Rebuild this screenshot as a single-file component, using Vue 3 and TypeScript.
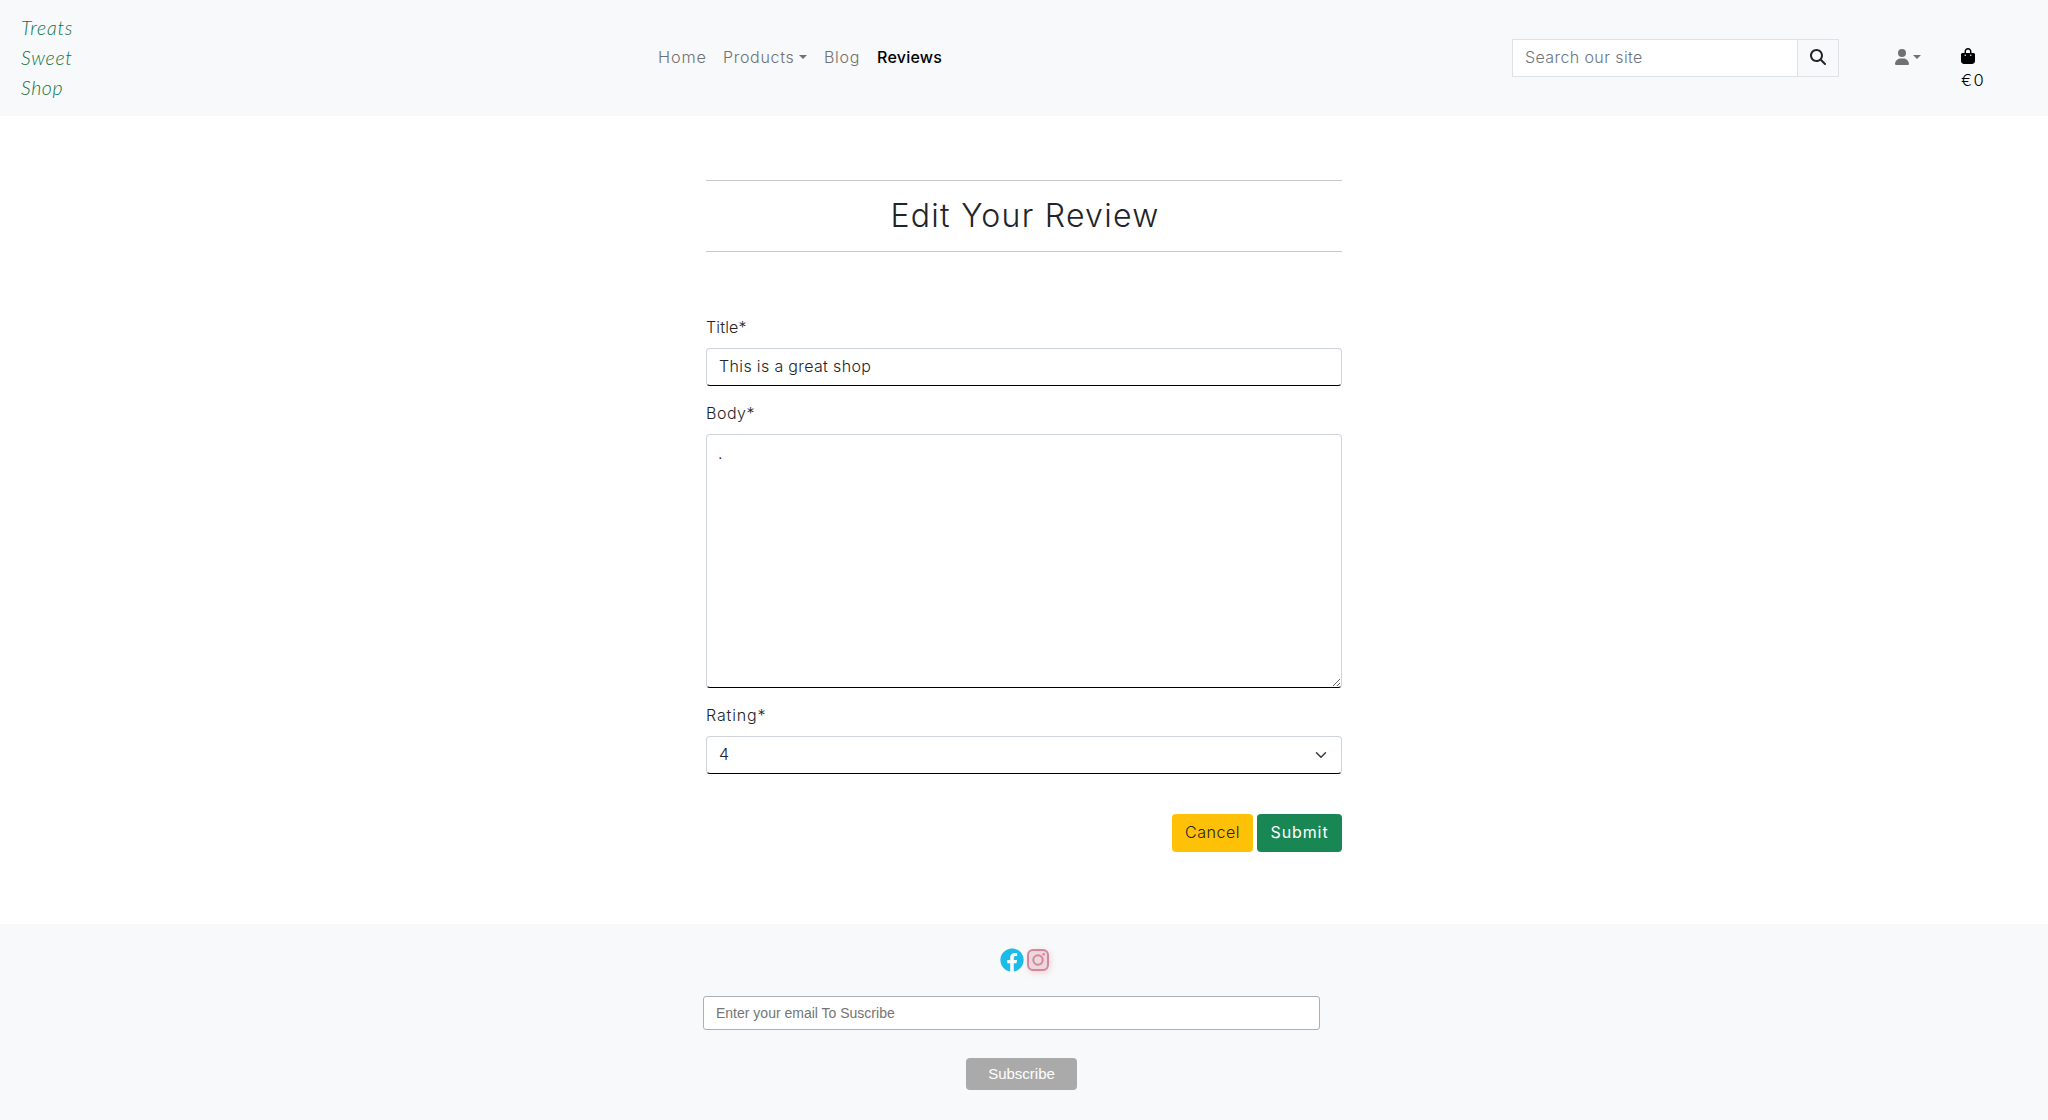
<script setup lang="ts">
import { ref } from 'vue'

const search = ref('')
const title = ref('This is a great shop')
const body = ref('.')
const rating = ref('4')
const email = ref('')
const ratings: string[] = ['1', '2', '3', '4', '5']
</script>

<template>
  <div class="page">
    <header class="header">
      <a class="brand"><span class="b1">Treats</span><span class="b2">Sweet</span><span class="b3">Shop</span></a>
      <nav class="nav">
        <a class="home">Home</a>
        <a class="products"><span>Products</span><i class="caret"></i></a>
        <a class="blog">Blog</a>
        <a class="active">Reviews</a>
      </nav>
      <form class="search" @submit.prevent>
        <input v-model="search" type="text" placeholder="Search our site" />
        <button type="submit" aria-label="Search">
          <svg width="16" height="16" viewBox="0 0 512 512"><path fill="#212529" d="M416 208c0 45.900-14.900 88.300-40 122.700L502.600 457.400c12.500 12.500 12.500 32.800 0 45.300s-32.800 12.500-45.300 0L330.700 376c-34.400 25.200-76.800 40-122.700 40C93.100 416 0 322.900 0 208S93.100 0 208 0S416 93.100 416 208zM208 352a144 144 0 1 0 0-288 144 144 0 1 0 0 288z" /></svg>
        </button>
      </form>
      <a class="account">
        <svg width="14" height="16" viewBox="0 0 448 512"><path fill="#707172" d="M224 256A128 128 0 1 0 224 0a128 128 0 1 0 0 256zm-45.700 48C79.800 304 0 383.800 0 482.300C0 498.700 13.300 512 29.700 512H418.300c16.400 0 29.700-13.300 29.700-29.700C448 383.800 368.200 304 269.700 304H178.300z" /></svg>
        <i class="caret"></i>
      </a>
      <a class="bag">
        <svg width="14" height="16" viewBox="0 0 448 512"><path d="M160 112c0-35.300 28.700-64 64-64s64 28.700 64 64v48H160V112zm-48 48H48c-26.500 0-48 21.500-48 48V416c0 53 43 96 96 96H352c53 0 96-43 96-96V208c0-26.500-21.500-48-48-48H336V112C336 50.100 285.900 0 224 0S112 50.100 112 112v48zm24 48a24 24 0 1 1 0 48 24 24 0 1 1 0-48zm152 24a24 24 0 1 1 48 0 24 24 0 1 1-48 0z" /></svg>
        <span>€0</span>
      </a>
    </header>

    <main class="content">
      <h2><span>Edit Your Review</span></h2>
      <form @submit.prevent>
        <label for="title">Title*</label>
        <input id="title" v-model="title" class="control" type="text" />
        <label for="body" class="body-label">Body*</label>
        <textarea id="body" v-model="body" class="control"></textarea>
        <label for="rating" class="rating-label">Rating*</label>
        <div class="select-wrap">
          <select id="rating" v-model="rating" class="control">
            <option v-for="r in ratings" :key="r">{{ r }}</option>
          </select>
          <svg class="chevron" width="16" height="12" viewBox="0 0 16 16"><path fill="none" stroke="#343a40" stroke-linecap="round" stroke-linejoin="round" stroke-width="2" d="m2 5 6 6 6-6" /></svg>
        </div>
        <div class="actions">
          <button type="button" class="cancel">Cancel</button>
          <button type="submit" class="submit">Submit</button>
        </div>
      </form>
    </main>

    <footer class="footer">
      <div class="social">
        <svg width="24" height="24" viewBox="0 0 512 512"><path fill="#1bbde8" d="M504 256C504 119 393 8 256 8S8 119 8 256c0 123.800 90.700 226.400 209.250 245V327.690h-63V256h63v-54.640c0-62.150 37-96.480 93.670-96.480 27.140 0 55.520 4.840 55.520 4.840v61h-31.280c-30.800 0-40.410 19.120-40.410 38.730V256h68.780l-11 71.690h-57.780V501C413.310 482.380 504 379.780 504 256z" /></svg>
        <svg class="insta" width="22" height="22" viewBox="0 0 22 22" fill="none" stroke="#d48797" stroke-width="2"><rect x="1" y="1" width="20" height="20" rx="5" fill="#ecd7df" /><circle cx="11" cy="11" r="4.700" /><circle cx="16.700" cy="5.300" r="1.300" fill="#d48797" stroke="none" /></svg>
      </div>
      <form @submit.prevent>
        <input v-model="email" type="email" placeholder="Enter your email To Suscribe" />
        <button type="submit">Subscribe</button>
      </form>
    </footer>
  </div>
</template>

<style>
body { margin: 0; background: #fff; }
</style>

<style scoped>
* { box-sizing: border-box; }
.page { width: 2048px; height: 1120px; overflow: hidden; display: flex; flex-direction: column; font: 300 16px/24px Inter, sans-serif; color: #212529; }
input, button, select, textarea { font: inherit; letter-spacing: inherit; color: inherit; margin: 0; outline: none; }
.header { height: 116px; flex: none; background: #f8f9fb; display: flex; align-items: flex-start; }
.brand { width: 657px; padding: 13px 0 0 21px; display: flex; flex-direction: column; font: italic 300 19.500px/30px Lato, sans-serif; color: #0b7442; }
.b1 { letter-spacing: .8px; }
.b2 { letter-spacing: .8px; }
.b3 { letter-spacing: .6px; }
.nav { width: 855px; padding-top: 45px; display: flex; color: #707173; }
.nav a { white-space: nowrap; flex: none; }
.home { width: 66px; padding-left: 1px; letter-spacing: .9px; font-size: 16.300px; }
.products { width: 101px; display: flex; align-items: center; letter-spacing: .7px; }
.blog { width: 53px; letter-spacing: .7px; }
.active { color: #000; font-weight: 500; letter-spacing: .25px; }
.caret { width: 0; height: 0; border: 4px solid transparent; border-top-color: #707173; border-bottom: 0; margin-left: 4px; }
.search { width: 327px; height: 38px; margin-top: 39px; display: flex; }
.search input { width: 286px; height: 38px; border: 1px solid #dee2e6; border-radius: 0; padding: 0 12px 2px; background: #fff; letter-spacing: .4px; }
.search input::placeholder { color: #6c757d; opacity: 1; }
.search button { width: 41px; border: 1px solid #dee2e6; border-left: 0; background: #f8f9fb; padding: 0 0 2px; display: flex; align-items: center; justify-content: center; }
.account { margin: 49px 0 0 56px; width: 66px; display: flex; align-items: flex-start; }
.account .caret { margin: 6px 0 0 4px; }
.bag { margin-top: 48px; display: flex; flex-direction: column; color: #000; }
.bag span { line-height: 24px; margin-top: 4px; letter-spacing: 1.3px; font-size: 16.500px; }
.content { width: 636px; margin: 64px 0 0 706px; height: 744px; flex: none; }
h2 { margin: 0 0 64px; height: 72px; border: solid #c8c9ca; border-width: 1px 0; font-weight: 300; font-size: 32px; line-height: 70px; text-align: center; letter-spacing: 1.280px; text-indent: 2px; white-space: nowrap; }
label { display: block; height: 24px; line-height: 22px; margin-bottom: 8px; letter-spacing: .15px; }
.body-label { letter-spacing: .5px; }
.rating-label { letter-spacing: .85px; }
.control { display: block; width: 636px; height: 38px; padding: 0 12px 2px; border: 1px solid #ced4da; border-bottom-color: #000; border-radius: 4px; background: #fff; letter-spacing: .35px; margin-bottom: 16px; }
textarea.control { height: 254px; padding: 6px 12px 6px 11px; line-height: 24px; resize: vertical; }
.select-wrap { position: relative; }
.select-wrap .control { appearance: none; margin: 0; }
.chevron { position: absolute; right: 13px; top: 13px; }
.actions { display: flex; justify-content: flex-end; gap: 4px; margin-top: 40px; }
.actions button { height: 38px; padding: 0 0 2px; border: 0; border-radius: 4px; letter-spacing: .5px; }
.actions .cancel { width: 81px; background: #ffc107; }
.actions .submit { width: 85px; background: #198754; color: #fff; font-weight: 400; letter-spacing: .9px; }
.footer { flex: 1; background: #f8f9fb; }
.social { height: 72px; padding: 24px 0 0 1000px; display: flex; gap: 3px; }
.insta { margin-top: 1px; overflow: visible; filter: drop-shadow(1px 2px 3px rgba(212, 110, 130, .28)); }
.footer form { width: 617px; margin-left: 703px; display: flex; flex-direction: column; font: 14px "Liberation Sans", sans-serif; }
.footer input { width: 617px; height: 34px; border: 1px solid #abb0b2; border-radius: 3px; background: #fff; padding: 0 12px; letter-spacing: 0; }
.footer input::placeholder { color: #757575; opacity: 1; }
.footer button { width: 111px; height: 32px; margin: 28px 0 0 263px; border: 0; border-radius: 4px; padding: 0 0 2px; background: #aaa; color: #fff; font-size: 15px; }
</style>
